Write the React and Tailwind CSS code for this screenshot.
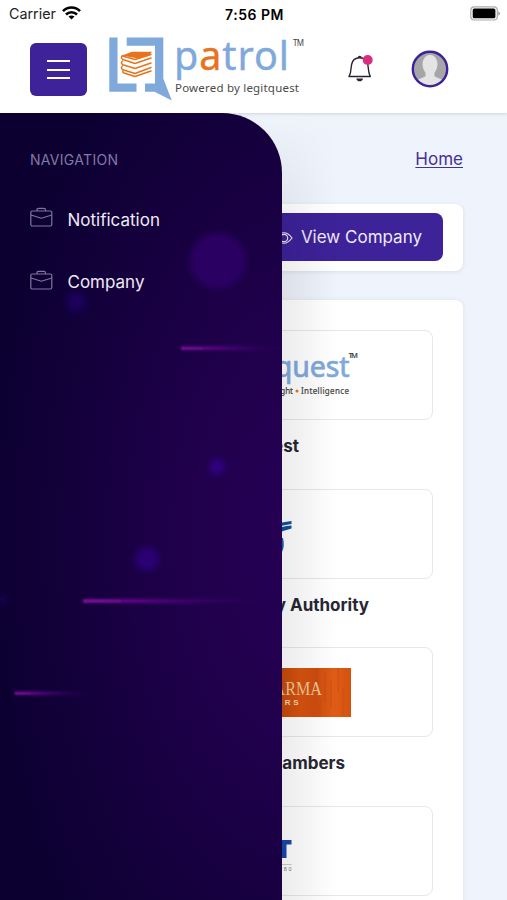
import React from 'react';

// Mock Data
const MENU = [
    { id: 1, label: "Notification" },
    { id: 2, label: "Company" },
];

const COMPANIES = [
    { id: 1, name: "Legitquest", width: "w-[91px]", Logo: LegitquestLogo },
    { id: 2, name: "y Authority", width: "w-[231px]", Logo: AuthorityLogo },
    { id: 3, name: "Chambers", width: "w-[183px]", Logo: ChambersLogo },
    { id: 4, name: "", width: "w-[183px]", Logo: TrustLogo },
];

function LegitquestLogo() {
    return (
        <svg width="214" height="60" viewBox="0 0 214 60" className="shrink-0">
            <text x="202.500" y="31.500" textAnchor="end" fontSize="28.500" letterSpacing="-0.100" fill="#7fa9db" stroke="#7fa9db" strokeWidth="0.700" fontFamily="Noto Sans, sans-serif">legitquest</text>
            <text x="201.500" y="13" fontSize="7.5" fill="#444" fontFamily="Noto Sans, sans-serif" textLength="9.500" fontWeight="600">TM</text>
            <text x="146" y="49" textAnchor="end" fontSize="8" fill="#444" stroke="#444" strokeWidth="0.200" fontFamily="Noto Sans, sans-serif">Insight</text>
            <circle cx="150" cy="46" r="1.5" fill="#e8731c" />
            <text x="154" y="49" fontSize="8" fill="#444" stroke="#444" strokeWidth="0.200" fontFamily="Noto Sans, sans-serif" textLength="48">Intelligence</text>
        </svg>
    );
}

function AuthorityLogo() {
    return (
        <svg width="76" height="60" viewBox="0 0 76 60" className="shrink-0">
            <path d="M56 21 Q66 18 75.500 17 L75.500 20 Q66 21 56 25Z" fill="#0f4f9e" />
            <path d="M56 26 Q66 22 75.500 21.500 L75.500 24.500 Q66 27 56 31Z" fill="#0f4f9e" />
            <path d="M60 33 L67 34 Q69 42 66 48 L60 50Z" fill="#1a62b4" />
        </svg>
    );
}

function ChambersLogo() {
    return (
        <svg width="194" height="49" viewBox="0 0 194 49" className="shrink-0">
            <defs>
                <linearGradient id="wood" x1="0" x2="1">
                    <stop offset="0.640" stopColor="#c44a0b" />
                    <stop offset="0.740" stopColor="#d9530f" />
                    <stop offset="0.820" stopColor="#ce4d0f" />
                    <stop offset="0.910" stopColor="#e15d17" />
                    <stop offset="1" stopColor="#d4520e" />
                </linearGradient>
            </defs>
            <rect width="194" height="49" fill="url(#wood)" />
            <path d="M160 0v18M168 4v30M174 12v26M181 0v24M186 20v28M163 30v19" stroke="#b9480f" strokeWidth="1.2" opacity="0.45" />
            <text x="165" y="27" textAnchor="end" fontSize="19" fill="#edc795" fontFamily="Liberation Serif, serif" textLength="69" lengthAdjust="spacingAndGlyphs">SHARMA</text>
            <text x="141.500" y="37" textAnchor="end" fontSize="8" fontWeight="bold" fill="#f3d5ab" fontFamily="Liberation Sans, sans-serif" textLength="64">CHAMBERS</text>
        </svg>
    );
}

function TrustLogo() {
    return (
        <svg width="76" height="60" viewBox="0 0 76 60" className="shrink-0">
            <path d="M58 19h17.500v4.500h-5V37h-6V23.500H58Z" fill="#1748ad" />
            <path d="M58 43.500h17.500" stroke="#aaa" strokeWidth="0.6" />
            <text x="75.500" y="49.500" textAnchor="end" fontSize="5.500" fill="#777" fontFamily="Liberation Sans, sans-serif">2 8 0</text>
        </svg>
    );
}

const PatrolLogo = () => (
    <svg width="210" height="90" viewBox="0 -10 210 90" className="-mt-[15px] ml-[13.5px] shrink-0">
        <g fill="#7fa9db">
            <path d="M9.300 7.500h8.200v46h19v8.200H9.300Z" />
            <path d="M26.700 7.500h36.600v41L71.800 70.500L54.500 61.700H45v-8.200h10V15.700H26.700Z" />
        </g>
        {/* Books */}
        <path d="M22 25.500 32 21.800H52L49 25.800 38 28.500Z" fill="#e8731c" />
        <g fill="none" stroke="#e8731c" strokeWidth="1.500" strokeLinecap="round" strokeLinejoin="round">
            <path d="M22.500 25.500C20.500 27 21.500 29 23 29.500L35 33.500 51 28" />
            <path d="M22.500 31C20.500 32.500 21.500 34 23 34.700L35 38.500 51 33" />
            <path d="M22.500 36C20.500 37.500 21.500 39 23 39.700L35 43.500 51 37.500" />
            <path d="M23.500 40.500C22 41.500 23 42.500 24 43L35 46.500 51 41" />
            <path d="M22.500 26 35 29.500 51 24.500" />
        </g>
        <text x="74" y="40" fontSize="39.500" fontFamily="Noto Sans, sans-serif" fill="#7fa9db" stroke="#7fa9db" strokeWidth="0.400" textLength="115">
            p<tspan fill="#e8731c" stroke="#e8731c">a</tspan>trol
        </text>
        <text x="193" y="15.500" fontSize="8" fontFamily="Noto Sans, sans-serif" fill="#444" textLength="11">TM</text>
        <text x="75" y="61.500" fontSize="11.500" fontFamily="Noto Sans, sans-serif" fill="#4a4a4a" textLength="124">Powered by legitquest</text>
    </svg>
);

const StatusBar = () => (
    <div className="flex h-7 items-center justify-between pl-[9px] pr-[7px] text-black">
        <div className="flex w-24 items-center gap-1.5 text-[14.3px] text-[#222]">
            Carrier
            <svg width="19" height="14" viewBox="0 0 19 14" fill="none" stroke="#000" strokeWidth="2.600" className="-mt-0.5">
                <path d="M1 5.200C5.800 0.300 13.200 0.300 18 5.200" />
                <path d="M4 8.500C7.100 5.500 11.900 5.500 15 8.500" />
                <path d="M9.500 13.500 6.500 10.500C8.200 9 10.800 9 12.500 10.500Z" fill="#000" stroke="none" />
            </svg>
        </div>
        <span className="text-[14px] font-semibold tracking-[0.5px]">7:56 PM</span>
        <div className="flex w-24 justify-end">
            <svg width="30" height="15" viewBox="0 0 30 15" className="-mt-0.5">
                <rect x="0.800" y="0.800" width="26.500" height="13.200" rx="3.500" fill="#fff" stroke="#aaa" strokeWidth="1.200" />
                <rect x="2.700" y="2.600" width="22.700" height="9.600" rx="1.500" fill="#000" />
                <path d="M28.300 5.300Q30 6 30 7.500T28.300 9.700Z" fill="#999" />
            </svg>
        </div>
    </div>
);

const Header = () => (
    <header className="relative h-[113px] bg-white shadow-[0_1px_3px_rgba(40,50,70,0.16)]">
        <StatusBar />
        <div className="flex items-start pl-[30px] pt-[7px]">
            <button className="mt-2 flex h-[53px] w-[56.5px] shrink-0 flex-col items-center justify-center gap-[6.5px] rounded-md bg-[#3d2299]">
                <span className="h-0.5 w-[23.5px] bg-white" />
                <span className="h-0.5 w-[23.5px] bg-white" />
                <span className="h-0.5 w-[23.5px] bg-white" />
            </button>
            <PatrolLogo />
            <svg width="26" height="32" viewBox="0 0 26 32" className="ml-[37px] mt-[17px] shrink-0">
                <path d="M2 24.500H23.300L22 21 20.800 12.500C20 8.500 17 5.800 12.700 5.800S5.400 8.500 4.600 12.500L3.400 21Z" fill="none" stroke="#25252f" strokeWidth="1.400" strokeLinejoin="round" />
                <path d="M10.700 5.700A2 2 0 0 1 14.700 5.700ZM9.300 26.500H16A3.400 3.400 0 0 1 9.300 26.500Z" fill="#25252f" />
                <circle cx="20.700" cy="8" r="5" fill="#dd2c80" />
            </svg>
            <svg width="38" height="38" viewBox="0 0 38 38" className="ml-[38px] mt-[15px] shrink-0">
                <defs>
                    <clipPath id="face"><circle cx="19" cy="19" r="16.500" /></clipPath>
                </defs>
                <circle cx="19" cy="19" r="17.300" fill="#a6a6a6" />
                <g clipPath="url(#face)" fill="#e4e4e4">
                    <ellipse cx="19" cy="14.500" rx="7.500" ry="9.800" />
                    <path d="M14.500 20H23.500V26C25 28 31 28 34 33V38H4V33C7 28 13 28 14.500 26Z" />
                </g>
                <circle cx="19" cy="19" r="17.200" fill="none" stroke="#3d2299" strokeWidth="2.400" />
            </svg>
        </div>
    </header>
);

const Drawer = () => (
    <aside className="absolute left-0 top-[113px] h-[787px] w-[282px] overflow-hidden rounded-tr-[60px] bg-[radial-gradient(ellipse_110%_75%_at_105%_54%,#260055_0%,#20004c_35%,#15003d_70%,#0b0030_100%)]">
        {/* Background glow */}
        <svg width="282" height="787" viewBox="0 0 282 787" className="absolute inset-0">
            <defs>
                <linearGradient id="beam" x1="0" x2="1">
                    <stop offset="0" stopColor="#7a0a98" />
                    <stop offset="0.300" stopColor="#5c0584" />
                    <stop offset="1" stopColor="#30005f" stopOpacity="0" />
                </linearGradient>
                <filter id="soft" x="-50%" y="-50%" width="200%" height="200%"><feGaussianBlur stdDeviation="3" /></filter>
                <filter id="lineSoft" x="-5%" y="-100%" width="110%" height="300%"><feGaussianBlur stdDeviation="0.800" /></filter>
            </defs>
            <g filter="url(#soft)">
                <circle cx="218" cy="148" r="28" fill="#290063" />
                <circle cx="76" cy="189" r="10" fill="#1c005c" />
                <circle cx="217" cy="354" r="7.500" fill="#320083" />
                <circle cx="147" cy="446" r="12" fill="#290073" />
                <circle cx="3" cy="486" r="6" fill="#12004a" />
            </g>
            <g filter="url(#lineSoft)" fill="url(#beam)">
                <rect x="181" y="233.500" width="108" height="3.500" />
                <rect x="83" y="486" width="190" height="4" />
                <rect x="14.500" y="578.500" width="76" height="3.500" />
            </g>
        </svg>
        <nav className="relative pl-[30px] pt-[36px]">
            <h2 className="text-[14px] leading-[21px] tracking-[0.3px] text-[#8578a5]">NAVIGATION</h2>
            <ul className="mt-[38.5px] space-y-[38.5px]">
                {MENU.map(item => (
                    <li key={item.id} className="flex h-6 items-center gap-[14.5px] text-[17px] text-[#eeeaf6]">
                        <svg width="23" height="20" viewBox="0 0 23 20" fill="none" stroke="#8175a0" strokeWidth="1.200" strokeLinejoin="round" className="-mt-[7px]">
                            <rect x="0.800" y="4" width="21" height="15" rx="1.500" />
                            <path d="M7 4V3Q7 1.300 8.500 1.300H14Q15.500 1.300 15.500 3V4M1 8 11.300 11.200 21.800 8" />
                        </svg>
                        {item.label}
                    </li>
                ))}
            </ul>
        </nav>
    </aside>
);

const App = () => {
    return (
        <div className="relative h-[900px] w-[507px] overflow-hidden bg-[#eff3fb] font-['Inter',sans-serif]">
            <Header />

            <main className="px-11">
                <div className="flex h-[91px] justify-end pt-[34px]">
                    <a href="#" className="h-6 text-[17px] leading-6 text-[#44309a] underline underline-offset-2">Home</a>
                </div>

                <div className="flex h-[67px] items-center justify-end rounded-lg bg-white pb-px pr-5 shadow-[0_1px_4px_rgba(40,50,70,0.1)]">
                    <button className="flex h-12 w-48 items-center justify-end gap-2 rounded-lg bg-[#3d2299] pr-[21px] pt-0.5 text-[17px] text-[#eeeaf8]">
                        <svg width="18" height="12" viewBox="0 0 18 12" fill="none" stroke="currentColor" strokeWidth="1.200">
                            <path d="M1 6Q9-4.500 17 6Q9 16.500 1 6Z" />
                            <circle cx="9" cy="6" r="3.700" />
                        </svg>
                        View Company
                    </button>
                </div>

                <div className="mt-[29px] h-[620px] rounded-lg bg-white px-[30px] pt-[30px] shadow-[0_0_4px_rgba(40,50,70,0.09)]">
                    {COMPANIES.map(({ id, name, width, Logo }) => (
                        <div key={id} className="h-[158.7px]">
                            <div className="flex h-[90px] items-center justify-center rounded-lg border border-[#e6e7ed]">
                                <Logo />
                            </div>
                            <p className={`mx-auto mt-3.5 flex h-6 justify-end whitespace-nowrap text-[17px] font-bold leading-6 text-[#282735] ${width}`}>{name}</p>
                        </div>
                    ))}
                </div>
            </main>

            {/* Drawer shade over the page */}
            <div className="absolute left-[222px] top-[114px] h-[786px] w-[115px] bg-linear-to-r from-black/8 from-50% to-transparent [mask-image:linear-gradient(to_bottom,transparent,black_120px)]" />
            <Drawer />
        </div>
    );
};

export default App;
